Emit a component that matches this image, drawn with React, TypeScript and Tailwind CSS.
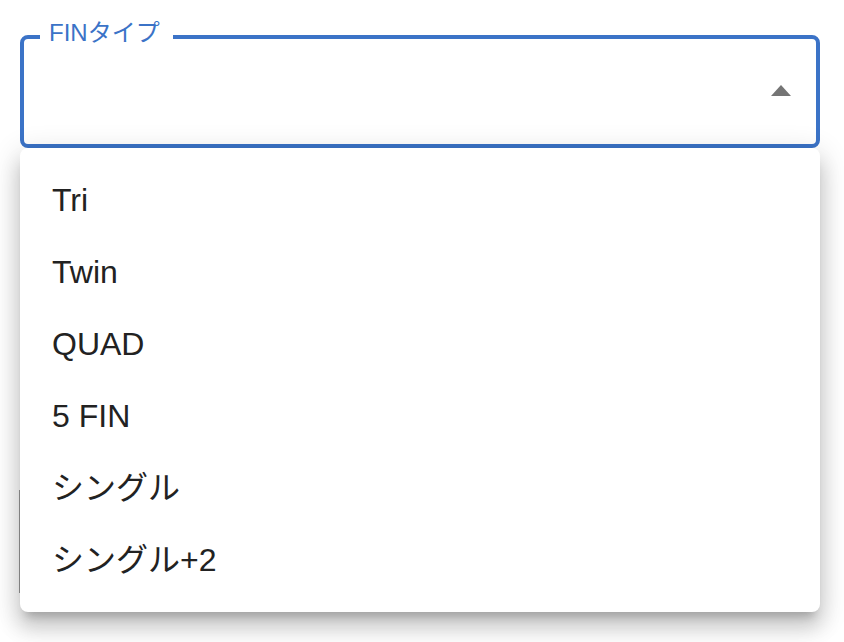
const options = ['Tri', 'Twin', 'QUAD', '5 FIN', 'シングル', 'シングル+2'];

const App = () => {
  return (
    <div
      className="relative min-h-[642px] w-[844px] bg-white pt-[35px]"
      style={{ fontFamily: '"Liberation Sans", "Noto Sans CJK JP", sans-serif' }}
    >
      {/* 下のフィールドの端（背景にうっすら見える） */}
      <div className="absolute left-[19px] top-[490px] h-[103px] w-px bg-[#9a9a9a]" />

      {/* アウトライン付きセレクト */}
      <div className="relative ml-[20px] mr-[24px] flex h-[113px] items-center justify-end rounded-[8px] border-4 border-[#3b73c7] pr-[25px]">
        <span className="absolute left-[16px] top-[-18px] bg-white pl-[9px] pr-[13px] text-[24px] leading-[24px] text-[#3b73c7]">
          FINタイプ
        </span>
        <svg width="20" height="11" viewBox="0 0 20 11" className="mt-[-2px]">
          <polygon points="0,11 10,0 20,11" fill="#757575" />
        </svg>
      </div>

      {/* ドロップダウンメニュー */}
      <ul className="relative z-10 ml-[20px] mr-[24px] rounded-[8px] bg-white py-[16px] shadow-[0_10px_10px_-6px_rgba(0,0,0,0.2),0_16px_20px_2px_rgba(0,0,0,0.14),0_6px_28px_4px_rgba(0,0,0,0.12)]">
        {options.map((o) => (
          <li key={o} className="flex h-[72px] items-center pl-[32px] text-[32px] text-[#222222]">
            {o}
          </li>
        ))}
      </ul>
    </div>
  );
};

export default App;
